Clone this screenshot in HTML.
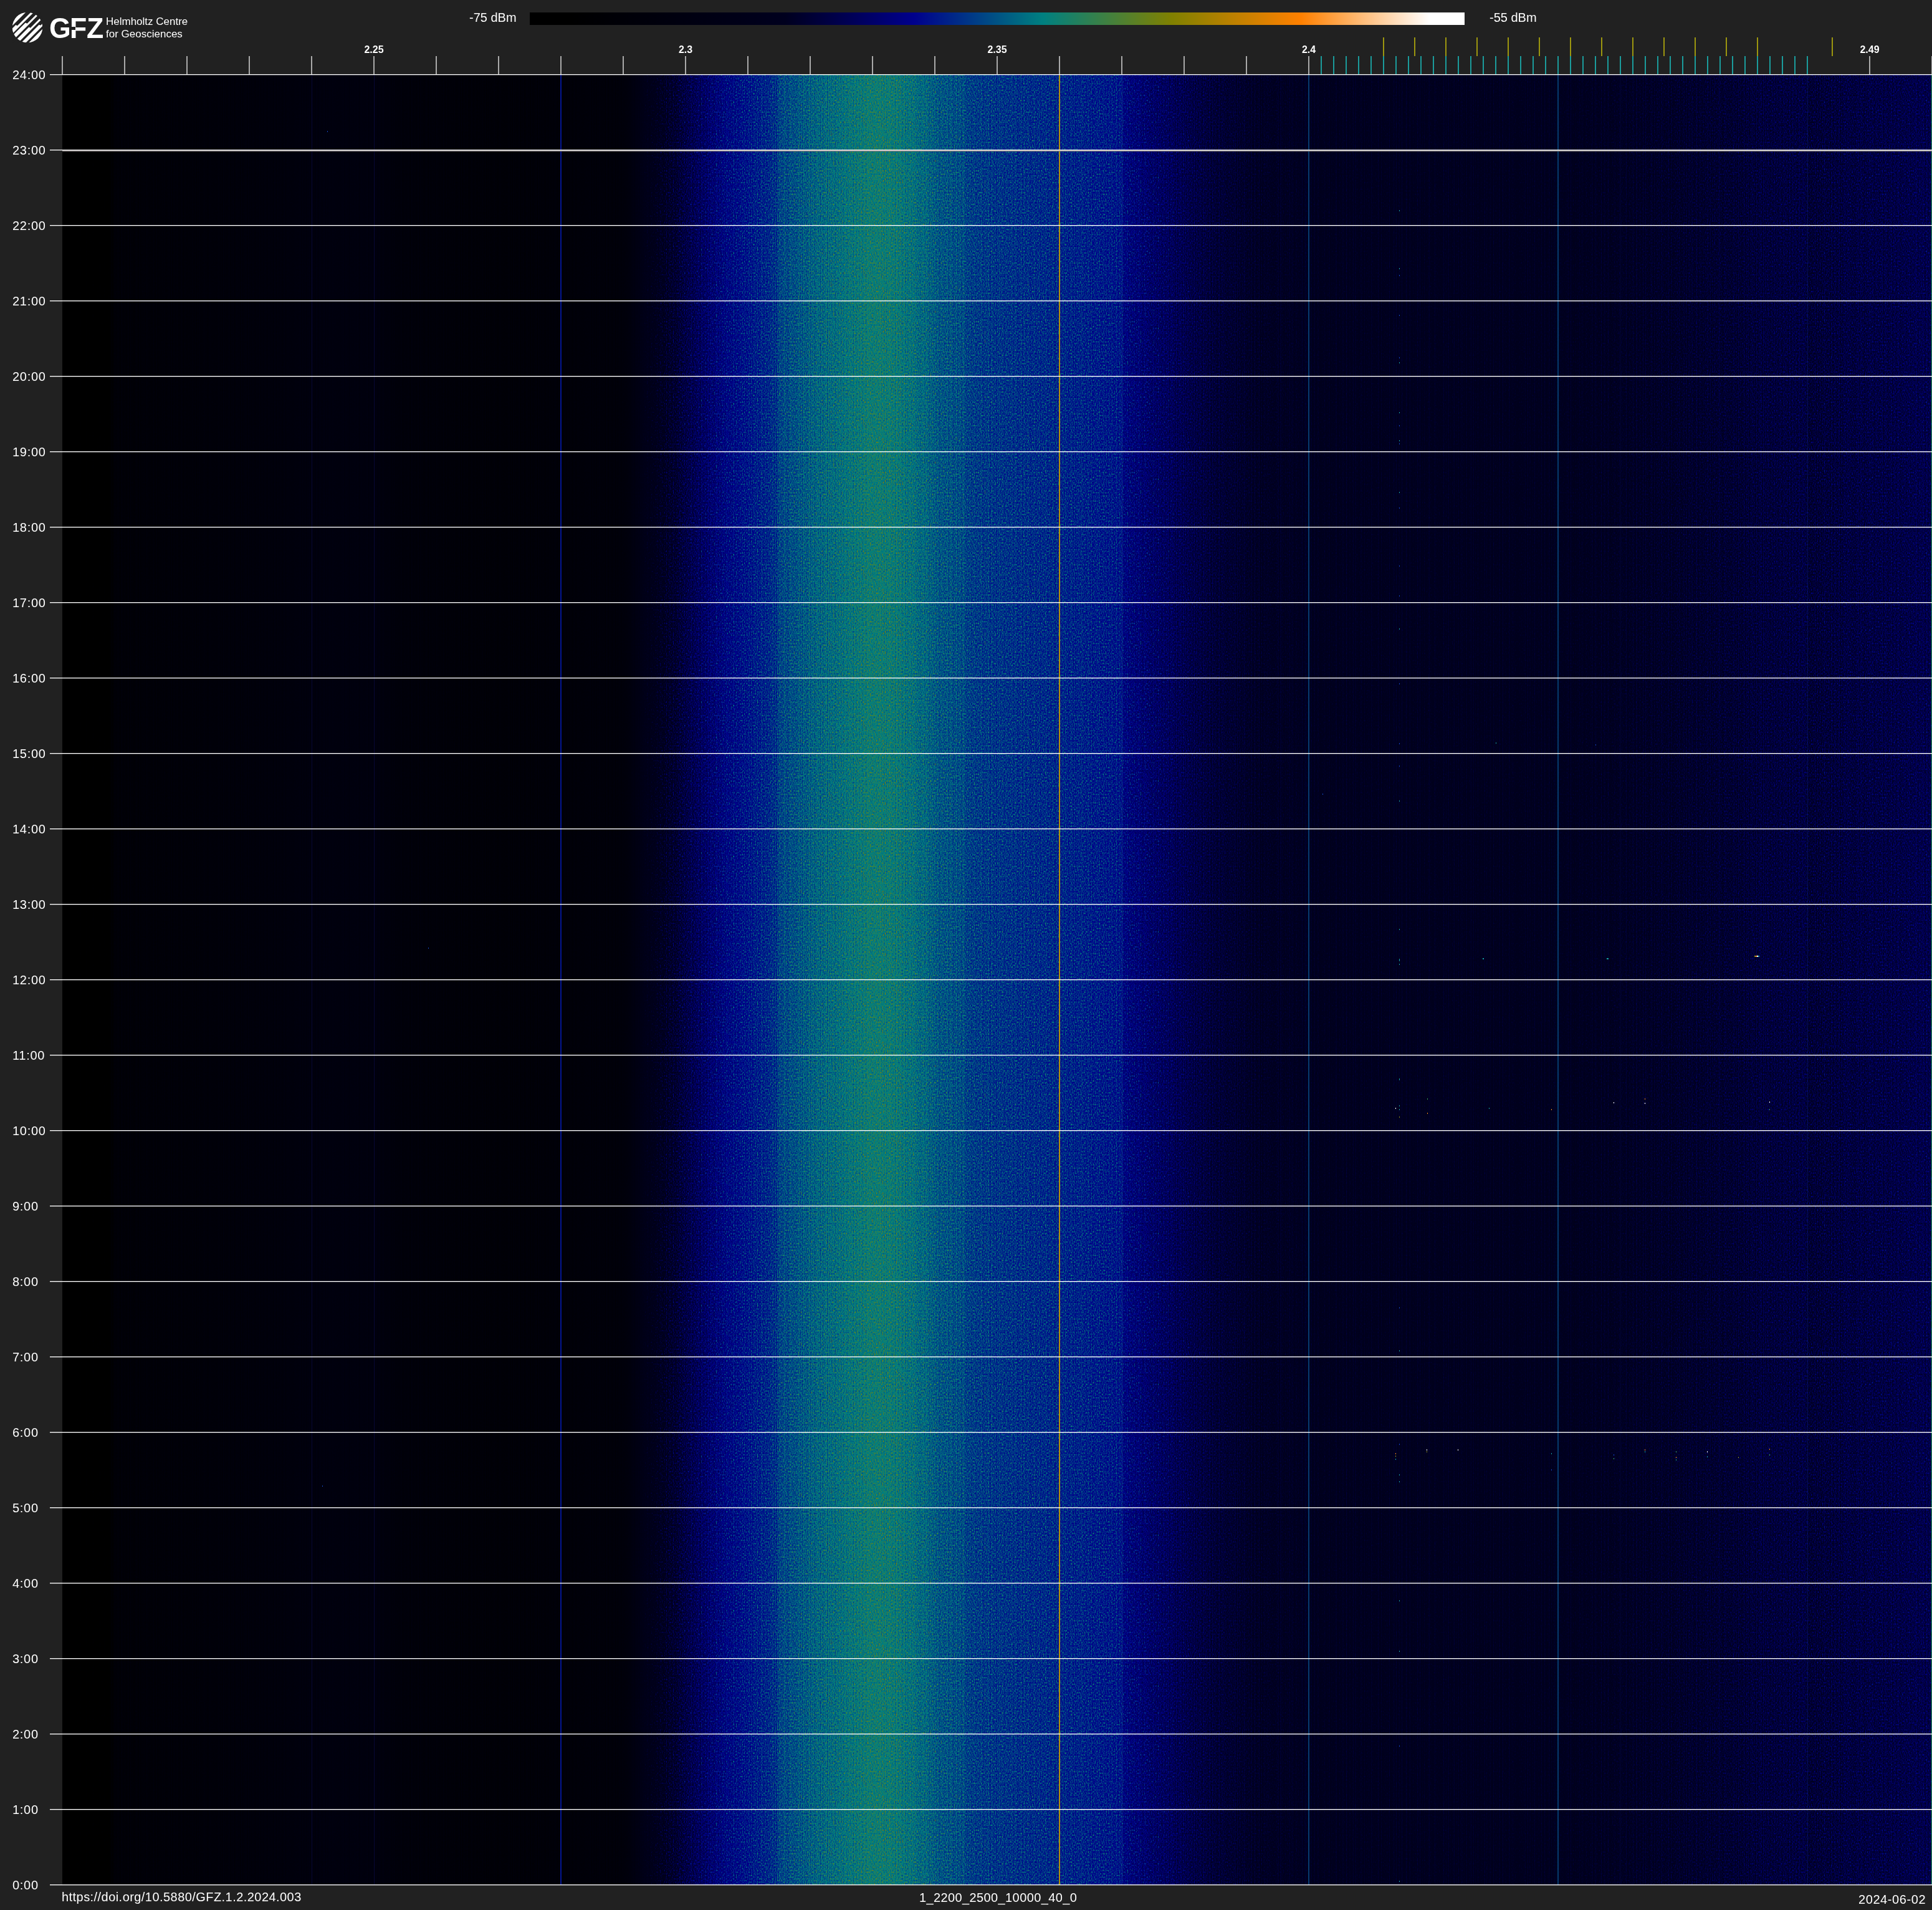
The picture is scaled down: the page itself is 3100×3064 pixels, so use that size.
<!DOCTYPE html><html lang="en"><head><meta charset="utf-8"><title>1_2200_2500_10000_40_0 2024-06-02</title>
<style>
html,body{margin:0;padding:0;background:#212121;}
body{width:3100px;height:3064px;position:relative;overflow:hidden;font-family:"Liberation Sans",sans-serif;color:#fff;}
.a{position:absolute;white-space:nowrap;line-height:1;}
.t,.hr,.fl,.g{will-change:transform;}
.t{font-size:20px;}
.hl{position:absolute;left:80px;width:3020px;height:1px;background:#fff;box-shadow:0 1px 0 rgba(255,255,255,.35);}
.hr{position:absolute;left:19.6px;font-size:20px;line-height:1;white-space:nowrap;letter-spacing:0.7px}
.fl{position:absolute;width:100px;text-align:center;font-size:16px;font-weight:bold;line-height:1;top:71.8px;white-space:nowrap;}
.gt{position:absolute;top:90px;width:2px;height:29px;background:#aaa;}
.bt{position:absolute;top:90px;width:2px;height:29px;background:#1b9c9c;}
.yt{position:absolute;top:60px;width:2px;height:30px;background:#9c960f;}
i{position:absolute;height:2px}
.vl{position:absolute;top:120px;height:2903px;}
</style></head><body>
<svg class="a" style="left:19px;top:19px" width="50" height="50" viewBox="19 19 50 50"><circle cx="44" cy="44" r="24.3" fill="#fff"/><g fill="#212121"><polygon points="0.50,60.50 60.50,0.50 64.60,4.60 27.85,41.35 25.25,40.05 2.65,62.65"/><polygon points="7.00,67.00 67.00,7.00 70.65,10.65 43.60,37.70 40.80,36.40 8.60,68.60"/><polygon points="12.75,72.75 72.75,12.75 76.70,16.70 48.75,44.65 46.45,43.45 14.95,74.95"/><polygon points="18.85,78.85 78.85,18.85 82.95,22.95 65.05,40.85 62.70,39.80 21.25,81.25"/><polygon points="25.00,85.00 85.00,25.00 87.35,27.35 57.35,57.35 57.35,57.35 27.35,87.35"/></g></svg>
<div class="a" style="left:78.5px;top:21.85px;font-size:46.5px;font-weight:bold;transform:scaleX(.96);transform-origin:0 0"><span style="letter-spacing:-1.7px">G</span><span style="letter-spacing:-.4px">F</span>Z</div>
<div class="a" style="left:114px;top:42.8px;width:6.8px;height:5.4px;background:#212121"></div>
<div class="a g" style="left:169.9px;top:24.6px;font-size:17px;line-height:20.2px;">Helmholtz Centre<br>for Geosciences</div>
<div class="a" style="left:850px;top:20px;width:1500px;height:20px;background:linear-gradient(to right,rgb(0,0,0) 0%,rgb(0,0,0) 4.5%,rgb(0,0,30) 27.3%,rgb(0,0,140) 41.1%,rgb(0,128,128) 54.9%,rgb(128,128,0) 68.7%,rgb(255,128,0) 82.5%,rgb(255,255,255) 96.3%,rgb(255,255,255) 100%)"></div>
<div class="a t" style="left:752.7px;top:18.2px;">-75 dBm</div>
<div class="a t" style="left:2390px;top:18.2px;">-55 dBm</div>
<div class="gt" style="left:99px"></div>
<div class="gt" style="left:199px"></div>
<div class="gt" style="left:299px"></div>
<div class="gt" style="left:399px"></div>
<div class="gt" style="left:499px"></div>
<div class="gt" style="left:599px"></div>
<div class="gt" style="left:699px"></div>
<div class="gt" style="left:799px"></div>
<div class="gt" style="left:899px"></div>
<div class="gt" style="left:999px"></div>
<div class="gt" style="left:1099px"></div>
<div class="gt" style="left:1199px"></div>
<div class="gt" style="left:1299px"></div>
<div class="gt" style="left:1399px"></div>
<div class="gt" style="left:1499px"></div>
<div class="gt" style="left:1599px"></div>
<div class="gt" style="left:1699px"></div>
<div class="gt" style="left:1799px"></div>
<div class="gt" style="left:1899px"></div>
<div class="gt" style="left:1999px"></div>
<div class="gt" style="left:2099px"></div>
<div class="gt" style="left:2999px"></div>
<div class="gt" style="left:3099px;width:1px"></div>
<div class="bt" style="left:2119px"></div>
<div class="bt" style="left:2139px"></div>
<div class="bt" style="left:2159px"></div>
<div class="bt" style="left:2179px"></div>
<div class="bt" style="left:2199px"></div>
<div class="bt" style="left:2219px"></div>
<div class="bt" style="left:2239px"></div>
<div class="bt" style="left:2259px"></div>
<div class="bt" style="left:2279px"></div>
<div class="bt" style="left:2299px"></div>
<div class="bt" style="left:2319px"></div>
<div class="bt" style="left:2339px"></div>
<div class="bt" style="left:2359px"></div>
<div class="bt" style="left:2379px"></div>
<div class="bt" style="left:2399px"></div>
<div class="bt" style="left:2419px"></div>
<div class="bt" style="left:2439px"></div>
<div class="bt" style="left:2459px"></div>
<div class="bt" style="left:2479px"></div>
<div class="bt" style="left:2499px"></div>
<div class="bt" style="left:2519px"></div>
<div class="bt" style="left:2539px"></div>
<div class="bt" style="left:2559px"></div>
<div class="bt" style="left:2579px"></div>
<div class="bt" style="left:2599px"></div>
<div class="bt" style="left:2619px"></div>
<div class="bt" style="left:2639px"></div>
<div class="bt" style="left:2659px"></div>
<div class="bt" style="left:2679px"></div>
<div class="bt" style="left:2699px"></div>
<div class="bt" style="left:2719px"></div>
<div class="bt" style="left:2739px"></div>
<div class="bt" style="left:2759px"></div>
<div class="bt" style="left:2779px"></div>
<div class="bt" style="left:2799px"></div>
<div class="bt" style="left:2819px"></div>
<div class="bt" style="left:2839px"></div>
<div class="bt" style="left:2859px"></div>
<div class="bt" style="left:2879px"></div>
<div class="bt" style="left:2899px"></div>
<div class="yt" style="left:2219px"></div>
<div class="yt" style="left:2269px"></div>
<div class="yt" style="left:2319px"></div>
<div class="yt" style="left:2369px"></div>
<div class="yt" style="left:2419px"></div>
<div class="yt" style="left:2469px"></div>
<div class="yt" style="left:2519px"></div>
<div class="yt" style="left:2569px"></div>
<div class="yt" style="left:2619px"></div>
<div class="yt" style="left:2669px"></div>
<div class="yt" style="left:2719px"></div>
<div class="yt" style="left:2769px"></div>
<div class="yt" style="left:2819px"></div>
<div class="yt" style="left:2939px"></div>
<div class="fl" style="left:550px">2.25</div>
<div class="fl" style="left:1050px">2.3</div>
<div class="fl" style="left:1550px">2.35</div>
<div class="fl" style="left:2050px">2.4</div>
<div class="fl" style="left:2950px">2.49</div>
<svg class="a" style="left:100px;top:120px" width="3000" height="2903" viewBox="0 0 3000 2903">
<defs><linearGradient id="g" x1="0" y1="0" x2="1" y2="0"><stop offset="0" stop-color="rgb(5,39,255)"/><stop offset=".008" stop-color="rgb(6,39,255)"/><stop offset=".017" stop-color="rgb(7,39,255)"/><stop offset=".025" stop-color="rgb(8,39,255)"/><stop offset=".028" stop-color="rgb(23,39,255)"/><stop offset=".033" stop-color="rgb(23,39,255)"/><stop offset=".042" stop-color="rgb(24,39,255)"/><stop offset=".05" stop-color="rgb(24,39,255)"/><stop offset=".058" stop-color="rgb(25,39,255)"/><stop offset=".067" stop-color="rgb(25,39,255)"/><stop offset=".075" stop-color="rgb(26,39,255)"/><stop offset=".083" stop-color="rgb(27,39,255)"/><stop offset=".092" stop-color="rgb(28,39,255)"/><stop offset=".1" stop-color="rgb(29,39,255)"/><stop offset=".108" stop-color="rgb(30,39,255)"/><stop offset=".117" stop-color="rgb(31,39,255)"/><stop offset=".12" stop-color="rgb(32,39,255)"/><stop offset=".125" stop-color="rgb(33,39,255)"/><stop offset=".133" stop-color="rgb(34,39,255)"/><stop offset=".14" stop-color="rgb(36,39,255)"/><stop offset=".142" stop-color="rgb(36,39,255)"/><stop offset=".15" stop-color="rgb(36,39,255)"/><stop offset=".158" stop-color="rgb(36,39,255)"/><stop offset=".167" stop-color="rgb(36,39,255)"/><stop offset=".175" stop-color="rgb(31,39,255)"/><stop offset=".18" stop-color="rgb(28,39,255)"/><stop offset=".183" stop-color="rgb(28,39,255)"/><stop offset=".192" stop-color="rgb(27,39,255)"/><stop offset=".2" stop-color="rgb(26,39,255)"/><stop offset=".208" stop-color="rgb(25,39,255)"/><stop offset=".217" stop-color="rgb(24,39,255)"/><stop offset=".225" stop-color="rgb(24,39,255)"/><stop offset=".233" stop-color="rgb(23,39,255)"/><stop offset=".242" stop-color="rgb(24,39,255)"/><stop offset=".25" stop-color="rgb(24,39,255)"/><stop offset=".258" stop-color="rgb(25,39,255)"/><stop offset=".267" stop-color="rgb(25,39,255)"/><stop offset=".275" stop-color="rgb(26,39,255)"/><stop offset=".283" stop-color="rgb(27,39,255)"/><stop offset=".292" stop-color="rgb(27,39,255)"/><stop offset=".3" stop-color="rgb(28,39,255)"/><stop offset=".307" stop-color="rgb(43,39,255)"/><stop offset=".308" stop-color="rgb(46,59,255)"/><stop offset=".313" stop-color="rgb(53,118,255)"/><stop offset=".317" stop-color="rgb(55,147,255)"/><stop offset=".32" stop-color="rgb(57,177,255)"/><stop offset=".325" stop-color="rgb(60,199,255)"/><stop offset=".327" stop-color="rgb(61,206,255)"/><stop offset=".333" stop-color="rgb(66,235,255)"/><stop offset=".342" stop-color="rgb(75,235,255)"/><stop offset=".35" stop-color="rgb(84,235,255)"/><stop offset=".358" stop-color="rgb(90,235,255)"/><stop offset=".367" stop-color="rgb(95,235,255)"/><stop offset=".375" stop-color="rgb(99,235,255)"/><stop offset=".382" stop-color="rgb(103,235,255)"/><stop offset=".383" stop-color="rgb(108,235,255)"/><stop offset=".392" stop-color="rgb(112,235,255)"/><stop offset=".4" stop-color="rgb(116,235,255)"/><stop offset=".408" stop-color="rgb(119,235,255)"/><stop offset=".417" stop-color="rgb(122,235,255)"/><stop offset=".425" stop-color="rgb(125,235,255)"/><stop offset=".433" stop-color="rgb(128,235,255)"/><stop offset=".442" stop-color="rgb(127,235,255)"/><stop offset=".447" stop-color="rgb(126,235,255)"/><stop offset=".45" stop-color="rgb(124,235,255)"/><stop offset=".457" stop-color="rgb(121,235,255)"/><stop offset=".458" stop-color="rgb(120,235,255)"/><stop offset=".465" stop-color="rgb(117,235,255)"/><stop offset=".467" stop-color="rgb(114,235,255)"/><stop offset=".475" stop-color="rgb(112,235,255)"/><stop offset=".483" stop-color="rgb(110,235,255)"/><stop offset=".483" stop-color="rgb(109,235,255)"/><stop offset=".484" stop-color="rgb(107,235,255)"/><stop offset=".492" stop-color="rgb(105,235,255)"/><stop offset=".5" stop-color="rgb(104,235,255)"/><stop offset=".508" stop-color="rgb(103,235,255)"/><stop offset=".517" stop-color="rgb(102,235,255)"/><stop offset=".525" stop-color="rgb(101,235,255)"/><stop offset=".533" stop-color="rgb(100,235,255)"/><stop offset=".542" stop-color="rgb(99,235,255)"/><stop offset=".55" stop-color="rgb(98,235,255)"/><stop offset=".558" stop-color="rgb(96,235,255)"/><stop offset=".566" stop-color="rgb(95,235,255)"/><stop offset=".567" stop-color="rgb(91,235,255)"/><stop offset=".567" stop-color="rgb(88,235,255)"/><stop offset=".575" stop-color="rgb(83,235,255)"/><stop offset=".583" stop-color="rgb(78,235,255)"/><stop offset=".592" stop-color="rgb(75,216,255)"/><stop offset=".6" stop-color="rgb(72,196,255)"/><stop offset=".608" stop-color="rgb(70,172,255)"/><stop offset=".617" stop-color="rgb(68,147,255)"/><stop offset=".625" stop-color="rgb(68,123,255)"/><stop offset=".633" stop-color="rgb(67,98,255)"/><stop offset=".642" stop-color="rgb(66,83,255)"/><stop offset=".643" stop-color="rgb(66,80,255)"/><stop offset=".65" stop-color="rgb(67,69,255)"/><stop offset=".658" stop-color="rgb(67,59,255)"/><stop offset=".667" stop-color="rgb(67,49,255)"/><stop offset=".667" stop-color="rgb(66,49,255)"/><stop offset=".675" stop-color="rgb(66,49,255)"/><stop offset=".683" stop-color="rgb(66,49,255)"/><stop offset=".692" stop-color="rgb(66,49,255)"/><stop offset=".7" stop-color="rgb(66,49,255)"/><stop offset=".708" stop-color="rgb(66,49,255)"/><stop offset=".717" stop-color="rgb(66,49,255)"/><stop offset=".725" stop-color="rgb(66,49,255)"/><stop offset=".733" stop-color="rgb(66,49,255)"/><stop offset=".742" stop-color="rgb(66,49,255)"/><stop offset=".75" stop-color="rgb(66,49,255)"/><stop offset=".758" stop-color="rgb(66,49,255)"/><stop offset=".767" stop-color="rgb(66,49,255)"/><stop offset=".775" stop-color="rgb(66,49,255)"/><stop offset=".783" stop-color="rgb(66,49,255)"/><stop offset=".792" stop-color="rgb(66,49,255)"/><stop offset=".8" stop-color="rgb(66,49,255)"/><stop offset=".8" stop-color="rgb(67,49,255)"/><stop offset=".808" stop-color="rgb(66,56,255)"/><stop offset=".817" stop-color="rgb(66,64,255)"/><stop offset=".825" stop-color="rgb(66,71,255)"/><stop offset=".833" stop-color="rgb(66,78,255)"/><stop offset=".842" stop-color="rgb(66,88,255)"/><stop offset=".85" stop-color="rgb(66,98,255)"/><stop offset=".858" stop-color="rgb(66,108,255)"/><stop offset=".867" stop-color="rgb(66,118,255)"/><stop offset=".875" stop-color="rgb(66,130,255)"/><stop offset=".883" stop-color="rgb(66,142,255)"/><stop offset=".892" stop-color="rgb(66,154,255)"/><stop offset=".9" stop-color="rgb(66,167,255)"/><stop offset=".908" stop-color="rgb(67,177,255)"/><stop offset=".917" stop-color="rgb(67,186,255)"/><stop offset=".925" stop-color="rgb(67,196,255)"/><stop offset=".933" stop-color="rgb(67,205,255)"/><stop offset=".933" stop-color="rgb(65,206,255)"/><stop offset=".934" stop-color="rgb(63,206,255)"/><stop offset=".942" stop-color="rgb(65,206,255)"/><stop offset=".95" stop-color="rgb(66,206,255)"/><stop offset=".953" stop-color="rgb(67,206,255)"/><stop offset=".958" stop-color="rgb(67,206,255)"/><stop offset=".967" stop-color="rgb(68,206,255)"/><stop offset=".975" stop-color="rgb(68,206,255)"/><stop offset=".983" stop-color="rgb(69,206,255)"/><stop offset=".992" stop-color="rgb(70,206,255)"/><stop offset="1" stop-color="rgb(70,206,255)"/></linearGradient>
<filter id="f" x="0" y="0" width="100%" height="100%" filterUnits="objectBoundingBox" color-interpolation-filters="sRGB">
<feTurbulence type="fractalNoise" baseFrequency="0.71 0.37" numOctaves="1" seed="7" stitchTiles="stitch" x="0" y="0" width="250" height="242" result="t1"/>
<feColorMatrix in="t1" type="matrix" values="0 0 0 0 1  0 0 0 1 0  0 0 0 0 0  0 0 0 0 1" x="0" y="0" width="250" height="242" result="g0"/>
<feComponentTransfer in="g0" x="0" y="0" width="250" height="242" result="g"><feFuncG type="table" tableValues="0 0 0 0 0 0 0 0 0 0 0 0 0 0 0 0 0 0 .01 .02 .031 .043 .054 .067 .08 .091 .103 .114 .125 .136 .146 .156 .165 .176 .186 .197 .208 .22 .233 .246 .26 .274 .288 .303 .318 .334 .352 .37 .388 .407 .426 .445 .465 .486 .509 .534 .56 .589 .62 .656 .698 .744 .8 .862 .93 .983 1 1 1 1 1 1 1 1 1 1 1 1 1 1 1 1 1 1 1 1"/></feComponentTransfer>
<feTile in="g" result="gt"/>
<feTurbulence type="fractalNoise" baseFrequency="0.55 0" numOctaves="1" seed="3" stitchTiles="stitch" x="0" y="0" width="1500" height="4" result="t2"/>
<feColorMatrix in="t2" type="matrix" values="0 0 0 0 0  0 0 0 0 0  0 0 0 1 0  0 0 0 0 1" x="0" y="0" width="1500" height="4" result="b"/>
<feTile in="b" result="bt"/>
<feComposite in="gt" in2="bt" operator="arithmetic" k1="0" k2="1" k3="1" k4="0" result="u"/>
<feComposite in="SourceGraphic" in2="u" operator="arithmetic" k1="1" k2="0" k3="0" k4="0" result="xx"/>
<feColorMatrix in="xx" type="matrix" values="1 .208 .11 0 -0.055  1 .208 .11 0 -0.055  1 .208 .11 0 -0.055  0 0 0 0 1" result="v"/>
<feComponentTransfer in="v"><feFuncR type="table" tableValues="0 0 0 0 0 0 0 0 0 0 0 0 0 0 0 0 0 0 0 0 0 0 0 0 0 0 0 0 0 0 0 0 0 0 0 0 0 0 0 0 0 0 0 0 0 0 0 0 0 0 0 0 0 0 0 0 0 0 0 0 0 0 0 0 0 0 0 0 0 0 0 0 0 0 0 0 0 0 0 0 0 0 0 0 0 0 0 0 0 0 0 0 0 0 0 0 0 0 0 0 0 0 0 0 0 0 0 0 0 0 .004 .022 .04 .058 .076 .095 .113 .131 .149 .167 .186 .204 .222 .24 .258 .276 .295 .313 .331 .349 .367 .386 .404 .422 .44 .458 .476 .495 .513 .531 .549 .567 .585 .603 .621 .639 .657 .675 .693 .711 .729 .747 .765 .783 .802 .82 .838 .856 .874 .892 .91 .928 .946 .964 .982 1 1 1 1 1 1 1 1 1 1 1 1 1 1 1 1 1 1 1 1 1 1 1 1 1 1 1 1 1 1 1 1 1 1 1 1"/><feFuncG type="table" tableValues="0 0 0 0 0 0 0 0 0 0 0 0 0 0 0 0 0 0 0 0 0 0 0 0 0 0 0 0 0 0 0 0 0 0 0 0 0 0 0 0 0 0 0 0 0 0 0 0 0 0 0 0 0 0 0 0 0 0 0 0 0 0 0 0 0 0 0 0 0 0 0 0 0 0 0 0 0 0 0 0 0 0 0 .015 .033 .051 .069 .087 .105 .124 .142 .16 .178 .196 .215 .233 .251 .269 .287 .306 .324 .342 .36 .378 .396 .415 .433 .451 .469 .487 .502 .502 .502 .502 .502 .502 .502 .502 .502 .502 .502 .502 .502 .502 .502 .502 .502 .502 .502 .502 .502 .502 .502 .502 .502 .502 .502 .502 .502 .502 .502 .502 .502 .502 .502 .502 .502 .502 .502 .502 .502 .502 .502 .502 .502 .502 .502 .502 .502 .502 .502 .502 .502 .502 .502 .502 .52 .538 .556 .574 .592 .61 .628 .646 .664 .682 .7 .718 .737 .755 .773 .791 .809 .827 .845 .863 .881 .899 .917 .935 .953 .971 .989 1 1 1 1 1 1 1 1"/><feFuncB type="table" tableValues="0 0 0 0 0 0 0 0 0 0 .003 .005 .008 .01 .013 .015 .018 .021 .023 .026 .028 .031 .034 .036 .039 .041 .044 .046 .049 .052 .054 .057 .059 .062 .064 .067 .07 .072 .075 .077 .08 .083 .085 .088 .09 .093 .095 .098 .101 .103 .106 .108 .111 .114 .116 .124 .14 .155 .171 .186 .202 .218 .233 .249 .265 .28 .296 .311 .327 .343 .358 .374 .39 .405 .421 .436 .452 .468 .483 .499 .515 .53 .546 .548 .546 .544 .543 .541 .539 .537 .536 .534 .532 .531 .529 .527 .525 .524 .522 .52 .519 .517 .515 .514 .512 .51 .508 .507 .505 .503 .498 .48 .462 .444 .426 .407 .389 .371 .353 .335 .316 .298 .28 .262 .244 .226 .207 .189 .171 .153 .135 .116 .098 .08 .062 .044 .025 .007 0 0 0 0 0 0 0 0 0 0 0 0 0 0 0 0 0 0 0 0 0 0 0 0 0 0 0 0 .036 .072 .109 .145 .181 .217 .254 .29 .326 .362 .399 .435 .471 .507 .543 .58 .616 .652 .688 .725 .761 .797 .833 .87 .906 .942 .978 1 1 1 1 1 1 1 1"/></feComponentTransfer>
</filter></defs>
<rect x="0" y="0" width="3000" height="2903" fill="url(#g)" filter="url(#f)"/>
</svg>
<div class="vl" style="left:499.5px;width:1px;background:rgba(20,20,130,.35)"></div>
<div class="vl" style="left:599.5px;width:1px;background:rgba(20,20,130,.35)"></div>
<div class="vl" style="left:899px;width:2px;background:#0418a0;opacity:.9"></div>
<div class="vl" style="left:1699px;width:2px;background:#b08e10"></div>
<div class="vl" style="left:2099px;width:2px;background:#0a5a9c;opacity:.65"></div>
<div class="vl" style="left:2499px;width:2px;background:#0a6aa8;opacity:.55"></div>
<div class="vl" style="left:1799.5px;width:1px;background:rgba(30,140,150,.3)"></div>
<div class="vl" style="left:2899.5px;width:1px;background:rgba(10,40,160,.35)"></div>
<div class="vl" style="left:2599.5px;width:1px;background:rgba(10,30,160,.15)"></div>
<div class="vl" style="left:3099px;width:1px;background:#2a9a6a"></div>
<i style="left:2239px;top:1777px;width:1px;background:#fff"></i>
<i style="left:2245px;top:1773px;width:1px;background:#14a0a0"></i>
<i style="left:2245px;top:1779px;width:1px;background:#14a0a0"></i>
<i style="left:2245px;top:1791px;width:1px;background:#8c8c18"></i>
<i style="left:2245px;top:1731px;width:1px;background:#14a0a0"></i>
<i style="left:2290px;top:1762px;width:1px;background:#38a858"></i>
<i style="left:2290px;top:1785px;width:1px;background:#f08818"></i>
<i style="left:2389px;top:1777px;width:1px;background:#14a0a0"></i>
<i style="left:2489px;top:1779px;width:1px;background:#f08818"></i>
<i style="left:2589px;top:1768px;width:1px;background:#fff"></i>
<i style="left:2639px;top:1762px;width:1px;background:#f08818"></i>
<i style="left:2639px;top:1769px;width:1px;background:#fff"></i>
<i style="left:2839px;top:1767px;width:1px;background:#fff"></i>
<i style="left:2839px;top:1779px;width:1px;background:#38a858"></i>
<i style="left:2239px;top:2331px;width:1px;background:#f08818"></i>
<i style="left:2239px;top:2335px;width:1px;background:#8c8c18"></i>
<i style="left:2239px;top:2340px;width:1px;background:#14a0a0"></i>
<i style="left:2245px;top:2316px;width:1px;background:#1444c0"></i>
<i style="left:2245px;top:2365px;width:1px;background:#14a0a0"></i>
<i style="left:2245px;top:2376px;width:1px;background:#14a0a0"></i>
<i style="left:2289px;top:2325px;width:1px;background:#fff"></i>
<i style="left:2289px;top:2328px;width:1px;background:#8c8c18"></i>
<i style="left:2339px;top:2325px;width:1px;background:#fff"></i>
<i style="left:2489px;top:2331px;width:1px;background:#14a0a0"></i>
<i style="left:2489px;top:2357px;width:1px;background:#1444c0"></i>
<i style="left:2589px;top:2333px;width:1px;background:#1444c0"></i>
<i style="left:2589px;top:2339px;width:1px;background:#38a858"></i>
<i style="left:2639px;top:2325px;width:1px;background:#f08818"></i>
<i style="left:2639px;top:2328px;width:1px;background:#14a0a0"></i>
<i style="left:2689px;top:2328px;width:1px;background:#38a858"></i>
<i style="left:2689px;top:2337px;width:1px;background:#f08818"></i>
<i style="left:2689px;top:2341px;width:1px;background:#14a0a0"></i>
<i style="left:2739px;top:2328px;width:1px;background:#fff"></i>
<i style="left:2739px;top:2336px;width:1px;background:#14a0a0"></i>
<i style="left:2789px;top:2337px;width:1px;background:#8c8c18"></i>
<i style="left:2839px;top:2324px;width:1px;background:#f08818"></i>
<i style="left:2839px;top:2333px;width:1px;background:#38a858"></i>
<i style="left:2245px;top:1490px;width:1px;background:#14a0a0"></i>
<i style="left:2245px;top:1538px;width:1px;background:#14a0a0"></i>
<i style="left:2245px;top:1546px;width:1px;background:#14a0a0"></i>
<i style="left:2379px;top:1537px;width:2px;background:#14a0a0"></i>
<i style="left:2578px;top:1537px;width:3px;background:#14a0a0"></i>
<i style="left:2815px;top:1533px;width:2px;background:#8c8c18"></i>
<i style="left:2817px;top:1533px;width:2px;background:#f08818"></i>
<i style="left:2819px;top:1533px;width:2px;background:#fff"></i>
<i style="left:2821px;top:1533px;width:2px;background:#14a0a0"></i>
<i style="left:2122px;top:1273px;width:1px;background:#1444c0"></i>
<i style="left:2400px;top:1191px;width:1px;background:#14a0a0"></i>
<i style="left:2560px;top:1194px;width:1px;background:#1444c0"></i>
<i style="left:525px;top:210px;width:1px;background:#1444c0"></i>
<i style="left:517px;top:2383px;width:1px;background:#1444c0"></i>
<i style="left:687px;top:1520px;width:1px;background:#1444c0"></i>
<i style="left:2245px;top:337px;width:1px;background:#14a0a0"></i>
<i style="left:2245px;top:430px;width:1px;background:#14a0a0"></i>
<i style="left:2245px;top:441px;width:1px;background:#1444c0"></i>
<i style="left:2245px;top:505px;width:1px;background:#1444c0"></i>
<i style="left:2245px;top:573px;width:1px;background:#1444c0"></i>
<i style="left:2245px;top:581px;width:1px;background:#14a0a0"></i>
<i style="left:2245px;top:661px;width:1px;background:#14a0a0"></i>
<i style="left:2245px;top:682px;width:1px;background:#1444c0"></i>
<i style="left:2245px;top:706px;width:1px;background:#14a0a0"></i>
<i style="left:2245px;top:711px;width:1px;background:#1444c0"></i>
<i style="left:2245px;top:789px;width:1px;background:#14a0a0"></i>
<i style="left:2245px;top:814px;width:1px;background:#1444c0"></i>
<i style="left:2245px;top:907px;width:1px;background:#1444c0"></i>
<i style="left:2245px;top:955px;width:1px;background:#1444c0"></i>
<i style="left:2245px;top:1008px;width:1px;background:#14a0a0"></i>
<i style="left:2245px;top:1096px;width:1px;background:#1444c0"></i>
<i style="left:2245px;top:1192px;width:1px;background:#1444c0"></i>
<i style="left:2245px;top:1228px;width:1px;background:#1444c0"></i>
<i style="left:2245px;top:1284px;width:1px;background:#14a0a0"></i>
<i style="left:2245px;top:1540px;width:1px;background:#14a0a0"></i>
<i style="left:2245px;top:1730px;width:1px;background:#14a0a0"></i>
<i style="left:2245px;top:2097px;width:1px;background:#1444c0"></i>
<i style="left:2245px;top:2166px;width:1px;background:#14a0a0"></i>
<i style="left:2245px;top:2567px;width:1px;background:#14a0a0"></i>
<i style="left:2245px;top:2648px;width:1px;background:#14a0a0"></i>
<i style="left:2245px;top:2800px;width:1px;background:#1444c0"></i>
<i style="left:2245px;top:3017px;width:1px;background:#14a0a0"></i>
<div class="a" style="left:100px;top:241px;width:3000px;height:1px;background:#bdb9b9"></div>
<div class="a" style="left:100px;top:242px;width:3000px;height:1px;background:#857f7f"></div>
<div class="hl" style="top:119px"></div>
<div class="hr" style="top:110.3px">24:00</div>
<div class="hl" style="top:240px;box-shadow:none;width:20px"></div>
<div class="hl" style="top:240px;left:100px;width:3000px;box-shadow:none"></div>
<div class="a" style="top:241px;left:80px;width:20px;height:1px;background:rgba(255,255,255,.35)"></div>
<div class="hr" style="top:231.3px">23:00</div>
<div class="hl" style="top:361px"></div>
<div class="hr" style="top:352.3px">22:00</div>
<div class="hl" style="top:482px"></div>
<div class="hr" style="top:473.3px">21:00</div>
<div class="hl" style="top:603px"></div>
<div class="hr" style="top:594.3px">20:00</div>
<div class="hl" style="top:724px"></div>
<div class="hr" style="top:715.3px">19:00</div>
<div class="hl" style="top:845px"></div>
<div class="hr" style="top:836.3px">18:00</div>
<div class="hl" style="top:966px"></div>
<div class="hr" style="top:957.3px">17:00</div>
<div class="hl" style="top:1087px"></div>
<div class="hr" style="top:1078.3px">16:00</div>
<div class="hl" style="top:1208px"></div>
<div class="hr" style="top:1199.3px">15:00</div>
<div class="hl" style="top:1329px"></div>
<div class="hr" style="top:1320.3px">14:00</div>
<div class="hl" style="top:1450px"></div>
<div class="hr" style="top:1441.3px">13:00</div>
<div class="hl" style="top:1571px"></div>
<div class="hr" style="top:1562.3px">12:00</div>
<div class="hl" style="top:1692px"></div>
<div class="hr" style="top:1683.3px">11:00</div>
<div class="hl" style="top:1813px"></div>
<div class="hr" style="top:1804.3px">10:00</div>
<div class="hl" style="top:1934px"></div>
<div class="hr" style="top:1925.3px">9:00</div>
<div class="hl" style="top:2055px"></div>
<div class="hr" style="top:2046.3px">8:00</div>
<div class="hl" style="top:2176px"></div>
<div class="hr" style="top:2167.3px">7:00</div>
<div class="hl" style="top:2297px"></div>
<div class="hr" style="top:2288.3px">6:00</div>
<div class="hl" style="top:2418px"></div>
<div class="hr" style="top:2409.3px">5:00</div>
<div class="hl" style="top:2539px"></div>
<div class="hr" style="top:2530.3px">4:00</div>
<div class="hl" style="top:2660px"></div>
<div class="hr" style="top:2651.3px">3:00</div>
<div class="hl" style="top:2781px"></div>
<div class="hr" style="top:2772.3px">2:00</div>
<div class="hl" style="top:2902px"></div>
<div class="hr" style="top:2893.3px">1:00</div>
<div class="hl" style="top:3023px"></div>
<div class="hr" style="top:3014.3px">0:00</div>
<div class="a t" style="left:99px;top:3033px;letter-spacing:0.446px">https://doi.org/10.5880/GFZ.1.2.2024.003</div>
<div class="a t" style="left:1474.6px;top:3034.1px;letter-spacing:0.386px">1_2200_2500_10000_40_0</div>
<div class="a t" style="left:2981.6px;top:3037.1px;letter-spacing:0.58px">2024-06-02</div>
</body></html>
